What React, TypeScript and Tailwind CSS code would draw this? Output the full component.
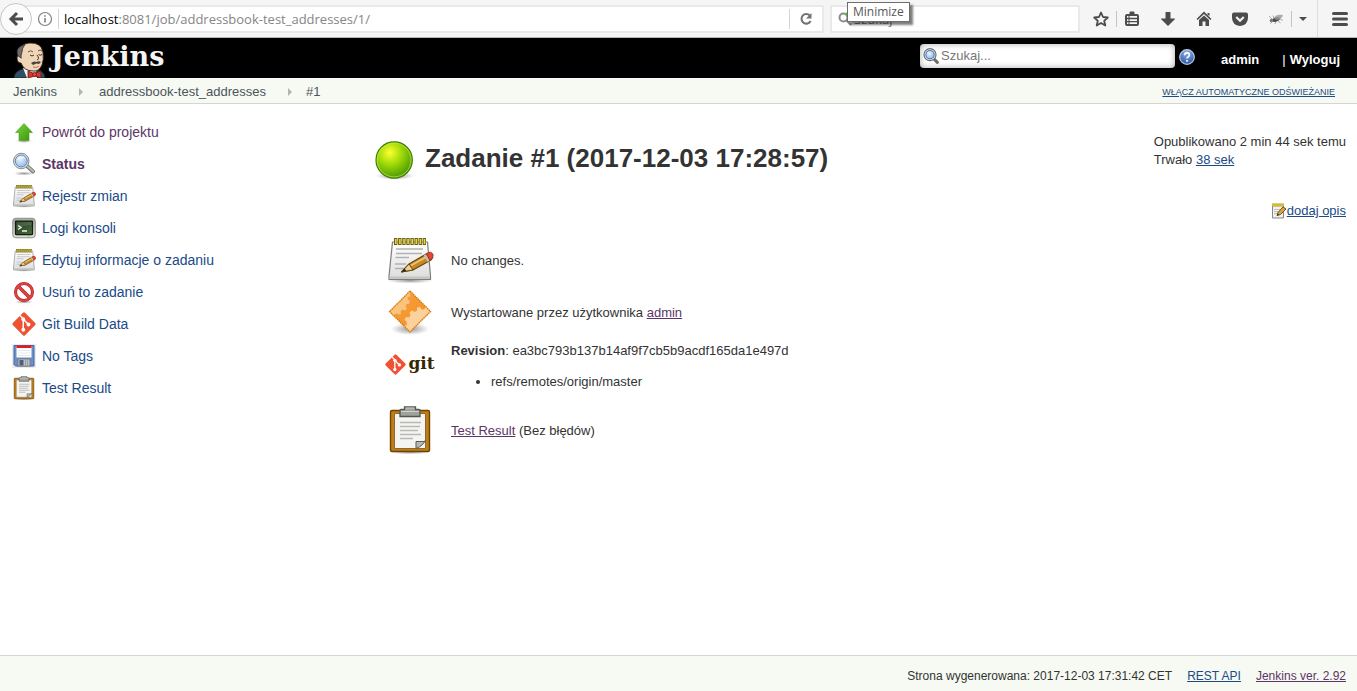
import type { ReactNode } from "react";

type IconProps = { className?: string };

const link = "text-[#204a87] underline";
const visited = "text-[#5c3566] underline";

function SharedGradients() {
  return (
    <svg className="absolute h-0 w-0" aria-hidden="true">
      <defs>
        <radialGradient id="ball" cx="0.38" cy="0.3" r="0.7">
          <stop offset="0" stopColor="#ffff30" />
          <stop offset="0.45" stopColor="#a3dc08" />
          <stop offset="1" stopColor="#4e9a06" />
        </radialGradient>
        <radialGradient id="shade">
          <stop offset="0" stopColor="#000" stopOpacity="0.4" />
          <stop offset="1" stopColor="#000" stopOpacity="0" />
        </radialGradient>
        <linearGradient id="paper" x1="0" y1="0" x2="0" y2="1">
          <stop offset="0" stopColor="#ffffff" />
          <stop offset="1" stopColor="#dcdcdc" />
        </linearGradient>
        <radialGradient id="glass" cx="0.4" cy="0.35" r="0.7">
          <stop offset="0" stopColor="#eef5fd" />
          <stop offset="1" stopColor="#8fb6e6" />
        </radialGradient>
        <linearGradient id="screen" x1="0" y1="0" x2="1" y2="1">
          <stop offset="0" stopColor="#1f3a1a" />
          <stop offset="1" stopColor="#4f6c44" />
        </linearGradient>
        <linearGradient id="case" x1="0" y1="0" x2="0" y2="1">
          <stop offset="0" stopColor="#a5a8a2" />
          <stop offset="1" stopColor="#dfe1dc" />
        </linearGradient>
        <linearGradient id="orange" x1="0" y1="0" x2="1" y2="1">
          <stop offset="0" stopColor="#f9a443" />
          <stop offset="1" stopColor="#f08c1c" />
        </linearGradient>
        <linearGradient id="arrow" x1="0" y1="0" x2="1" y2="1">
          <stop offset="0" stopColor="#7ed63c" />
          <stop offset="1" stopColor="#36940c" />
        </linearGradient>
        <radialGradient id="help" cx="0.5" cy="0.2" r="0.9">
          <stop offset="0" stopColor="#8fb3e8" />
          <stop offset="1" stopColor="#204a9a" />
        </radialGradient>
      </defs>
    </svg>
  );
}

function Svg({ className = "size-6", children }: IconProps & { children: ReactNode }) {
  return (
    <svg viewBox="0 0 48 48" className={`${className} shrink-0`} aria-hidden="true">
      {children}
    </svg>
  );
}

function UpIcon({ className }: IconProps) {
  return (
    <Svg className={className}>
      <ellipse cx="24" cy="42" rx="16" ry="4" fill="url(#shade)" />
      <path d="M24 7 41 25H34V41H14V25H7Z" fill="url(#arrow)" stroke="#4aa01c" strokeWidth="1.200" strokeLinejoin="round" />
    </Svg>
  );
}

function LoupeIcon({ className }: IconProps) {
  return (
    <Svg className={className}>
      <ellipse cx="24" cy="43" rx="20" ry="4" fill="url(#shade)" />
      <path d="M30 28 42 39" stroke="#777a76" strokeWidth="8" strokeLinecap="round" />
      <path d="M31 28.500 42 38.500" stroke="#b4b7b3" strokeWidth="4.500" strokeLinecap="round" />
      <circle cx="18.500" cy="18" r="15.500" fill="#e4e6e3" stroke="#888a85" strokeWidth="2" />
      <circle cx="18.500" cy="18" r="12" fill="url(#glass)" stroke="#5c89c8" strokeWidth="2" />
      <path d="M9 17Q10 9 19 8.500Q26 9 27 14Q19 11 9 17Z" fill="#fff" opacity="0.6" />
    </Svg>
  );
}

/** The loupe cropped to its outline, for use inside a text field. */
function FieldLoupe() {
  return (
    <svg viewBox="0 0 48 48" className="size-4 shrink-0" aria-hidden="true">
      <path d="M32 32 43 43" stroke="#6b6e6a" strokeWidth="9" strokeLinecap="round" />
      <circle cx="21" cy="20" r="18" fill="#f2f3f1" stroke="#6b6e6a" strokeWidth="3.500" />
      <circle cx="21" cy="20" r="12.500" fill="url(#glass)" stroke="#4f7fc0" strokeWidth="3.500" />
    </svg>
  );
}

function NotepadIcon({ className }: IconProps) {
  return (
    <Svg className={className}>
      <ellipse cx="24" cy="44.500" rx="23" ry="3" fill="url(#shade)" />
      <path d="M6.500 6H41.500L44.500 40V43.500H3V40Z" fill="url(#paper)" stroke="#7d7f7a" strokeWidth="1.200" strokeLinejoin="round" />
      <path d="M3.500 40.500H44V43H3.500Z" fill="#c4c6c2" />
      <path d="M10 13H37M10 17.500H36M9.500 21.500H23M9 28H20M9 32.500H18" stroke="#b0b2ae" strokeWidth="1.300" />
      <path d="M8 5.500H40" stroke="#6f620c" strokeWidth="7" strokeDasharray="3.400 0.700" />
      <path d="M9 5.500H40" stroke="#e8d44d" strokeWidth="5" strokeDasharray="1.600 2.500" />
      <path d="M15.500 36 23 28 41 17.500 45.500 19Q47.500 21 45 24L27 34Z" fill="#c68827" stroke="#6b4708" strokeWidth="1.200" strokeLinejoin="round" />
      <path d="M25 29.500 41 20.500" stroke="#edc573" strokeWidth="2" />
      <path d="M15.500 36 23 28 27 34Z" fill="#e9cf98" stroke="#6b4708" strokeWidth="1" />
      <path d="M15.500 36 18.500 32.500 20.500 35Z" fill="#2b2b2b" />
      <path d="M40.500 17.500Q45 14.500 47 18.500Q48 22 44 24.500Z" fill="#e8413a" stroke="#a03a2e" />
      <path d="M38.500 18.800 42.500 25.500" stroke="#bfc3c0" strokeWidth="2" />
    </Svg>
  );
}

/** A note with an upright pencil, drawn for sixteen pixels. */
function NoteIcon() {
  return (
    <svg viewBox="0 0 16 16" className="size-4 shrink-0" aria-hidden="true">
      <path d="M1.500 2H12.500V15H1.500Z" fill="#f0f0ee" stroke="#85878a" />
      <path d="M3 6.500H9M3 8.500H8M3 10.500H6" stroke="#b4b6b2" strokeWidth="0.800" />
      <path d="M1 2H13" stroke="#b59a14" strokeWidth="3" />
      <path d="M1.500 2H13" stroke="#f0de58" strokeWidth="2" strokeDasharray="1 1" />
      <path d="M6 12.500 7 9.500 12 4 15 6 9.500 11.500Z" fill="#d9a545" stroke="#5d430e" strokeWidth="0.900" strokeLinejoin="round" />
      <path d="M6 12.500 6.700 10.500 8 12Z" fill="#222" />
    </svg>
  );
}

function TerminalIcon({ className }: IconProps) {
  return (
    <Svg className={className}>
      <rect x="1.500" y="4.500" width="45" height="39" rx="6" fill="url(#case)" stroke="#8d908a" strokeWidth="2" />
      <rect x="7" y="10" width="34" height="27" rx="1" fill="url(#screen)" stroke="#10200c" strokeWidth="2.500" />
      <path d="M12 19 18 23 12 27M20 30H30" fill="none" stroke="#eef5e6" strokeWidth="2.800" />
      <path d="M9 12H39V18Q24 18 9 26Z" fill="#fff" opacity="0.12" />
      <circle cx="33" cy="41" r="1.600" fill="#7ddc2c" />
    </Svg>
  );
}

function DeleteIcon({ className }: IconProps) {
  return (
    <Svg className={className}>
      <ellipse cx="24" cy="44" rx="18" ry="3.500" fill="url(#shade)" />
      <circle cx="24" cy="24" r="17" fill="#fff" fillOpacity="0.6" stroke="#b41818" strokeWidth="6" />
      <path d="M12.500 12.500 35.500 35.500" stroke="#b41818" strokeWidth="6.500" />
      <circle cx="24" cy="24" r="17" fill="none" stroke="#dd4343" strokeWidth="3.800" />
      <path d="M12.500 12.500 35.500 35.500" stroke="#dd4343" strokeWidth="4.500" />
    </Svg>
  );
}

function GitMark({ className }: IconProps) {
  return (
    <Svg className={className}>
      <rect x="6.700" y="6.700" width="34.600" height="34.600" rx="3" fill="#f05133" transform="rotate(45 24 24)" />
      <path d="M16 7 22.500 13.500V36M22.500 14.500 33 25" fill="none" stroke="#fff" strokeWidth="3" />
      <circle cx="22.500" cy="14.500" r="3.800" fill="#fff" />
      <circle cx="22.500" cy="35.500" r="3.800" fill="#fff" />
      <circle cx="33" cy="25" r="3.800" fill="#fff" />
    </Svg>
  );
}

function FloppyIcon({ className }: IconProps) {
  return (
    <Svg className={className}>
      <rect width="48" height="48" fill="#e9ebf0" />
      <path d="M4 3H44V44H7L4 41Z" fill="#6b90c8" stroke="#47699c" strokeWidth="2" strokeLinejoin="round" />
      <rect x="9" y="4" width="30" height="23" fill="#fff" />
      <rect x="9" y="3" width="30" height="5" fill="#e0201c" />
      <path d="M12 13H37M12 18H37M12 23H37" stroke="#dcdee0" strokeWidth="1.300" />
      <rect x="12" y="30" width="24" height="14" fill="#c0c2c2" stroke="#6c7076" strokeWidth="1.500" />
      <rect x="15" y="32" width="8" height="11" fill="#4f5f7c" />
      <path d="M27 31V43M31 31V43" stroke="#8f918f" strokeWidth="1.500" />
    </Svg>
  );
}

function ClipboardIcon({ className }: IconProps) {
  return (
    <Svg className={className}>
      <ellipse cx="24" cy="46" rx="20" ry="2.500" fill="url(#shade)" />
      <rect x="4.500" y="4.500" width="39" height="41" rx="1.500" fill="#c17d11" stroke="#6e4406" strokeWidth="1.400" />
      <path d="M8.500 7.500H39.500V42.500H8.500Z" fill="#f4f4f3" stroke="#8a6a30" strokeWidth="1" />
      <path d="M14 16.500H35M14 20.500H34M14 24.500H32M14 28.500H35M14 32.500H27" stroke="#b7b9b5" strokeWidth="1.700" />
      <path d="M30 42.500V35.500H39.500V34Q37 40 30 42.500Z" fill="#b6b8b4" stroke="#5b5d59" strokeWidth="1" />
      <path d="M14 4.500Q14 3.500 15 3.500H18.500V1H29.500V3.500H33Q34 3.500 34 4.500V10.500H14Z" fill="#a0a39c" stroke="#54574f" strokeWidth="1.300" />
      <path d="M15 5.500H33M19.500 2H28.500" stroke="#cfd1cc" strokeWidth="1" />
    </Svg>
  );
}

function PackageIcon({ className }: IconProps) {
  return (
    <Svg className={className}>
      <ellipse cx="24" cy="41" rx="19" ry="6" fill="url(#shade)" />
      <path d="M24 3 44.500 23.500 24 44 3.500 23.500Z" fill="url(#orange)" />
      <path d="M24 3 24 8.500 21.500 9 22 12 24 13 23 16 20.500 16 19.500 18.500 21 20.500 19 22.500 16.500 21.500 14.500 23.500 15 26 12 26.500 11 25 7.500 27.500 3.500 23.500Z" fill="#fbd09a" opacity="0.75" />
      <path d="M24 44 18 38 21 36.500 20.500 33.500 18.500 32 20 29 23 29.500 24.500 27 23.500 24.500 26 22.500 28.500 24 31 22.500 31 19.500 34 19 35.500 21.500 38 21.500 39.500 19 40.500 19.500 44.500 23.500Z" fill="#fddcb0" opacity="0.85" />
      <path d="M24 3 44.500 23.500 24 44 3.500 23.500Z" fill="none" stroke="#d9780c" strokeWidth="1.400" strokeDasharray="1.500 0.700" />
    </Svg>
  );
}

function BallIcon({ className }: IconProps) {
  return (
    <Svg className={className}>
      <ellipse cx="24" cy="43" rx="23" ry="5" fill="url(#shade)" />
      <circle cx="23" cy="24" r="21.800" fill="url(#ball)" stroke="#3f7a08" strokeWidth="1.400" />
      <circle cx="23" cy="24" r="20.300" fill="none" stroke="#b9ee3c" strokeWidth="1.200" opacity="0.75" />
    </Svg>
  );
}

function JenkinsHead() {
  return (
    <svg viewBox="0 0 34 38" className="h-[38px] w-[34px] shrink-0" aria-hidden="true">
      <path d="M1 38Q1 32 9 29L24 29Q32 32 32 38Z" fill="#2f5064" stroke="#16242c" />
      <path d="M10 28 14 38H24L23 30Z" fill="#f3f3f0" />
      <path d="M6 15Q5 4 16 3Q28 2 30 12Q31 20 29 25Q26 32 20 31Q11 31 8 23Q4 23 4 18Q4 15 6 15Z" fill="#f0d6b7" stroke="#2a211b" strokeWidth="0.900" />
      <path d="M5 16Q2 9 8 6L12 4.500Q9 8 9 12L8 16Q9 20 7 17Z" fill="#6d6b6d" stroke="#2a211b" strokeWidth="0.700" />
      <path d="M15 12Q18 9.500 20 12M25 11Q27 9 29 11" fill="none" stroke="#2a211b" strokeWidth="0.700" />
      <path d="M17 15Q19 17 21 15M25.500 14.500Q27 16 29 14.500M24 15Q27 19 24 20" fill="none" stroke="#2a211b" strokeWidth="0.900" />
      <path d="M18 23Q21 20.500 23.500 22Q26 20.500 28 22L26 24L23.500 23.500L20 25Z" fill="#4a4243" />
      <path d="M20 27Q23 28 26 26.500" fill="none" stroke="#8e4b3c" strokeWidth="0.700" />
      <path d="M15 31 21 33.500 28 31V38L22 36 15 38Z" fill="#d33833" stroke="#6b1310" strokeWidth="0.800" />
      <circle cx="21.500" cy="34.500" r="2" fill="#ef3d3a" stroke="#6b1310" strokeWidth="0.700" />
    </svg>
  );
}

function ToolButton({ label, children }: { label: string; children: ReactNode }) {
  return (
    <button type="button" aria-label={label} className="flex h-7 w-[30px] shrink-0 items-center justify-center text-[#4c4c4c]">
      <svg viewBox="0 0 16 16" className="size-4" fill="currentColor" aria-hidden="true">
        {children}
      </svg>
    </button>
  );
}

function BrowserBar() {
  return (
    <div className="flex h-[38px] items-center border-b border-[#b6b6b6] bg-[#f5f5f5] font-['Open_Sans','Noto_Sans',sans-serif] text-[13px]">
      <button type="button" aria-label="Back" className="z-10 flex size-8 shrink-0 items-center justify-center rounded-full border border-[#c6c6c6] bg-[#fbfbfb] text-[#4c4c4c]">
        <svg viewBox="0 0 16 16" className="size-4" fill="none" stroke="currentColor" strokeWidth="3" aria-hidden="true">
          <path d="M9 2 3 8 9 14M3 8H15" />
        </svg>
      </button>
      <div className="-ml-4 flex h-7 flex-1 items-center border-2 border-[#e9e9e9] bg-white pl-[19px]">
        <svg viewBox="0 0 16 16" className="size-4 shrink-0" fill="none" stroke="#808080" aria-hidden="true">
          <circle cx="8" cy="8" r="6.500" strokeWidth="1.200" />
          <path d="M8 7V11.500M8 4.200V5.800" strokeWidth="1.600" />
        </svg>
        <span className="ml-[5px] h-5 w-px bg-[#d4d4d4]" />
        <p className="flex-1 pl-[5px] text-[#858585]">
          <span className="text-black">localhost</span>:8081/job/addressbook-test_addresses/1/
        </p>
        <span className="h-5 w-px bg-[#d4d4d4]" />
        <button type="button" aria-label="Reload" className="flex w-8 items-center justify-center">
          <svg viewBox="0 0 16 16" className="size-4" fill="none" stroke="#737373" strokeWidth="2" aria-hidden="true">
            <path d="M11.800 4.500A4.800 4.800 0 1 0 12.600 10" />
            <path d="M13.500 2V7.500H8Z" fill="#737373" stroke="none" />
          </svg>
        </button>
      </div>
      <div className="relative ml-1.5 flex h-7 w-[250px] items-center border-2 border-[#e9e9e9] bg-white pl-1.5">
        <svg viewBox="0 0 16 16" className="size-4 shrink-0" fill="none" stroke="#8c8c8c" strokeWidth="2" aria-hidden="true">
          <circle cx="5.500" cy="6.500" r="4" />
          <path d="M8.500 9.500 13 14" />
          <circle cx="10" cy="3.500" r="2.500" fill="#4fc21f" stroke="none" />
        </svg>
        <input aria-label="Szukaj" placeholder="Szukaj" className="w-full bg-transparent outline-none placeholder:text-[#757575]" />
        <div role="tooltip" className="absolute -top-[5px] left-[15px] border border-[#6e6e6e] bg-white px-[5px] text-[12px] leading-[18px] text-[#575757] shadow-[3px_3px_2px_rgba(0,0,0,0.5)]">
          Minimize
        </div>
      </div>
      <div className="ml-1.5 flex items-center">
        <ToolButton label="Bookmark">
          <path d="M8 1.500 10 6 14.800 6.500 11.200 9.800 12.300 14.500 8 12 3.700 14.500 4.800 9.800 1.200 6.500 6 6Z" fill="none" stroke="currentColor" strokeWidth="1.800" strokeLinejoin="round" />
        </ToolButton>
        <span className="h-4 w-px bg-[#c4c4c4]" />
        <div className="flex gap-1.5">
          <ToolButton label="Bookmarks list">
            <path fillRule="evenodd" d="M5.500 3V1.500Q5.500 0.500 6.500 0.500H9.500Q10.500 0.500 10.500 1.500V3H13Q15 3 15 5V13Q15 15 13 15H3Q1 15 1 13V5Q1 3 3 3ZM3 5V6.700H4.500V5ZM5.500 5V6.700H13V5ZM3 8.200V9.900H4.500V8.200ZM5.500 8.200V9.900H13V8.200ZM3 11.300V13H4.500V11.300ZM5.500 11.300V13H13V11.300Z" />
          </ToolButton>
          <ToolButton label="Downloads">
            <path d="M5.500 1.500Q5.500 1 6 1H10Q10.500 1 10.500 1.500V7.500H14.500Q15.500 7.500 14.800 8.300L8 15 1.200 8.300Q0.500 7.500 1.500 7.500H5.500Z" />
          </ToolButton>
          <ToolButton label="Home">
            <path d="M8 0.500 15.500 8 14.300 9 8 3 1.700 9 0.500 8ZM8 4.500 13 9V15H9.500V10.500H6.500V15H3V9ZM11.500 2H13.500V5L11.500 3.500Z" />
          </ToolButton>
          <ToolButton label="Pocket">
            <path fillRule="evenodd" d="M2 1.500H14Q16 1.500 16 3.500V7Q15.500 14.500 8 15Q0.500 14.500 0 7V3.500Q0 1.500 2 1.500ZM3.500 6.800 8 11.300 12.500 6.800 11 5.300 8 8.300 5 5.300Z" />
          </ToolButton>
          <ToolButton label="Bug">
            <ellipse cx="8" cy="8.500" rx="4" ry="2" fill="#4a4a4a" transform="rotate(-20 8 8.500)" />
            <circle cx="3.500" cy="9.500" r="1.800" fill="#777" />
            <path d="M6 7Q8 2.500 15 4Q14 8.500 8 9Z" fill="#9a9a9a" opacity="0.8" />
            <path d="M1 5 4 8M5 4.500 6 7M5 10 2 12.500M8 10.500 7 13M10 10 12.500 12M12 8 15 9.500" stroke="#888" strokeWidth="0.700" />
          </ToolButton>
        </div>
        <span className="h-4 w-px bg-[#c4c4c4]" />
        <button type="button" aria-label="More" className="flex h-7 w-[22px] items-center justify-center">
          <svg viewBox="0 0 8 4" className="h-1 w-2" fill="#4c4c4c" aria-hidden="true">
            <path d="M0 0H8L4 4Z" />
          </svg>
        </button>
      </div>
      <div className="ml-[3px] flex h-full items-center border-l border-[#dcdcdc] pr-0.5 pl-[7px]">
        <ToolButton label="Menu">
          <rect y="1" width="16" height="3" rx="1.500" />
          <rect y="6.500" width="16" height="3" rx="1.500" />
          <rect y="12" width="16" height="3" rx="1.500" />
        </ToolButton>
      </div>
    </div>
  );
}

function Header() {
  return (
    <header className="flex h-10 items-center bg-black pr-[17px] pl-[13px] text-white">
      <a href="#home" className="flex h-full items-end gap-1">
        <JenkinsHead />
        <span className="pb-1 font-['DejaVu_Serif',serif] text-[27px] leading-[34px] font-bold text-[#f4f4f4]">Jenkins</span>
      </a>
      <form className="mb-1 ml-auto flex h-6 w-[255px] items-center rounded bg-white pl-[3px] text-[13px] shadow-[inset_0_0_6px_rgba(0,0,0,0.35)]">
        <FieldLoupe />
        <input aria-label="Szukaj..." placeholder="Szukaj..." className="ml-0.5 w-full bg-transparent text-[#333] outline-none placeholder:text-[#777]" />
      </form>
      <a href="#help" aria-label="Help" className="mb-0.5 ml-1">
        <svg viewBox="0 0 16 16" className="size-4" aria-hidden="true">
          <circle cx="8" cy="8" r="7.300" fill="url(#help)" stroke="#b7cbea" strokeWidth="1.200" />
          <path d="M5.600 6.200Q5.600 3.900 8 3.900T10.400 6Q10.400 7.300 8.900 8.100Q8 8.700 8 9.600M8 11V12.800" fill="none" stroke="#fff" strokeWidth="1.700" />
        </svg>
      </a>
      <nav className="mt-1 ml-[26px] flex text-[13px] font-bold">
        <a href="#admin">admin</a>
        <span className="mr-1 ml-[23px] font-normal">|</span>
        <a href="#logout">Wyloguj</a>
      </nav>
    </header>
  );
}

function Crumb() {
  return (
    <svg viewBox="0 0 4 8" className="mx-auto h-2 w-1" fill="#b4b4b4" aria-hidden="true">
      <path d="M0 0 4 4 0 8Z" />
    </svg>
  );
}

const tasks = [
  { label: "Powrót do projektu", Icon: UpIcon, style: "text-[#5c3566]" },
  { label: "Status", Icon: LoupeIcon, style: "font-bold text-[#5c3566]" },
  { label: "Rejestr zmian", Icon: NotepadIcon, style: "text-[#204a87]" },
  { label: "Logi konsoli", Icon: TerminalIcon, style: "text-[#204a87]" },
  { label: "Edytuj informacje o zadaniu", Icon: NotepadIcon, style: "text-[#204a87]" },
  { label: "Usuń to zadanie", Icon: DeleteIcon, style: "text-[#204a87]" },
  { label: "Git Build Data", Icon: GitMark, style: "text-[#204a87]" },
  { label: "No Tags", Icon: FloppyIcon, style: "text-[#204a87]" },
  { label: "Test Result", Icon: ClipboardIcon, style: "text-[#204a87]" },
];

function SummaryRow({ icon, children }: { icon: ReactNode; children: ReactNode }) {
  return (
    <li className="flex min-h-[52px] gap-[17px] py-0.5">
      <div className="flex size-12 shrink-0 items-center justify-center">{icon}</div>
      <div className="self-center pt-0.5">{children}</div>
    </li>
  );
}

export default function App() {
  return (
    <div className="flex min-h-screen flex-col bg-white font-['Liberation_Sans',Arial,sans-serif] text-[13px] leading-[18px] text-[#333]">
      <SharedGradients />
      <BrowserBar />
      <Header />
      <div className="flex h-[26px] items-center justify-between border-b border-[#d3d7cf] bg-[#f6faf2] pt-0.5 pr-[22px] pl-[13px] text-[#4d545d]">
        <nav aria-label="Breadcrumb" className="flex items-center">
          <a href="#jenkins">Jenkins</a>
          <span className="w-[42px] pl-1.5"><Crumb /></span>
          <a href="#project">addressbook-test_addresses</a>
          <span className="w-10 pl-2"><Crumb /></span>
          <a href="#build">#1</a>
        </nav>
        <a href="#refresh" className="text-[9px] text-[#204a87] uppercase underline">włącz automatyczne odświeżanie</a>
      </div>

      <div className="flex flex-1">
        <nav aria-label="Tasks" className="w-[375px] shrink-0 pt-3 pl-3">
          <ul>
            {tasks.map(({ label, Icon, style }) => (
              <li key={label}>
                <a href="#task" className={`flex h-8 items-center gap-1.5 text-[14px] ${style}`}>
                  <Icon className="size-6" />
                  <span>{label}</span>
                </a>
              </li>
            ))}
          </ul>
        </nav>

        <main className="min-w-0 flex-1 pr-[11px]">
          <div className="flex justify-between pt-[29px]">
            <h1 className="flex h-[50px] items-center gap-2.5 text-[26px] leading-8 font-bold">
              <BallIcon className="mt-1 size-10" />
              <span>Zadanie #1 (2017-12-03 17:28:57)</span>
            </h1>
            <aside className="flex flex-col">
              <p>Opublikowano 2 min 44 sek temu</p>
              <p>Trwało <a href="#trend" className={link}>38 sek</a></p>
              <a href="#describe" className={`mt-[33px] flex items-center self-end ${link}`}>
                <NoteIcon />
                dodaj opis
              </a>
            </aside>
          </div>

          <ul className="mt-[14px] pl-[11px]">
            <SummaryRow icon={<NotepadIcon className="size-12" />}>No changes.</SummaryRow>
            <SummaryRow icon={<PackageIcon className="size-12" />}>
              Wystartowane przez użytkownika <a href="#admin" className={visited}>admin</a>
            </SummaryRow>
            <SummaryRow
              icon={
                <div className="flex items-center gap-0.5">
                  <GitMark className="size-[21px]" />
                  <span className="pb-0.5 font-['DejaVu_Serif',serif] text-[17px] font-bold text-[#362701]">git</span>
                </div>
              }
            >
              <p><b>Revision</b>: ea3bc793b137b14af9f7cb5b9acdf165da1e497d</p>
              <ul className="mt-[13px] mb-[11px] list-disc pl-10">
                <li>refs/remotes/origin/master</li>
              </ul>
            </SummaryRow>
            <SummaryRow icon={<ClipboardIcon className="size-12" />}>
              <a href="#tests" className={visited}>Test Result</a> (Bez błędów)
            </SummaryRow>
          </ul>
        </main>
      </div>

      <footer className="flex h-9 items-center justify-end gap-[15px] border-t border-[#d3d7cf] bg-[#f6faf2] pt-1 pr-[11px] text-[12px]">
        <span>Strona wygenerowana: 2017-12-03 17:31:42 CET</span>
        <a href="#api" className={link}>REST API</a>
        <a href="#version" className={visited}>Jenkins ver. 2.92</a>
      </footer>
    </div>
  );
}
